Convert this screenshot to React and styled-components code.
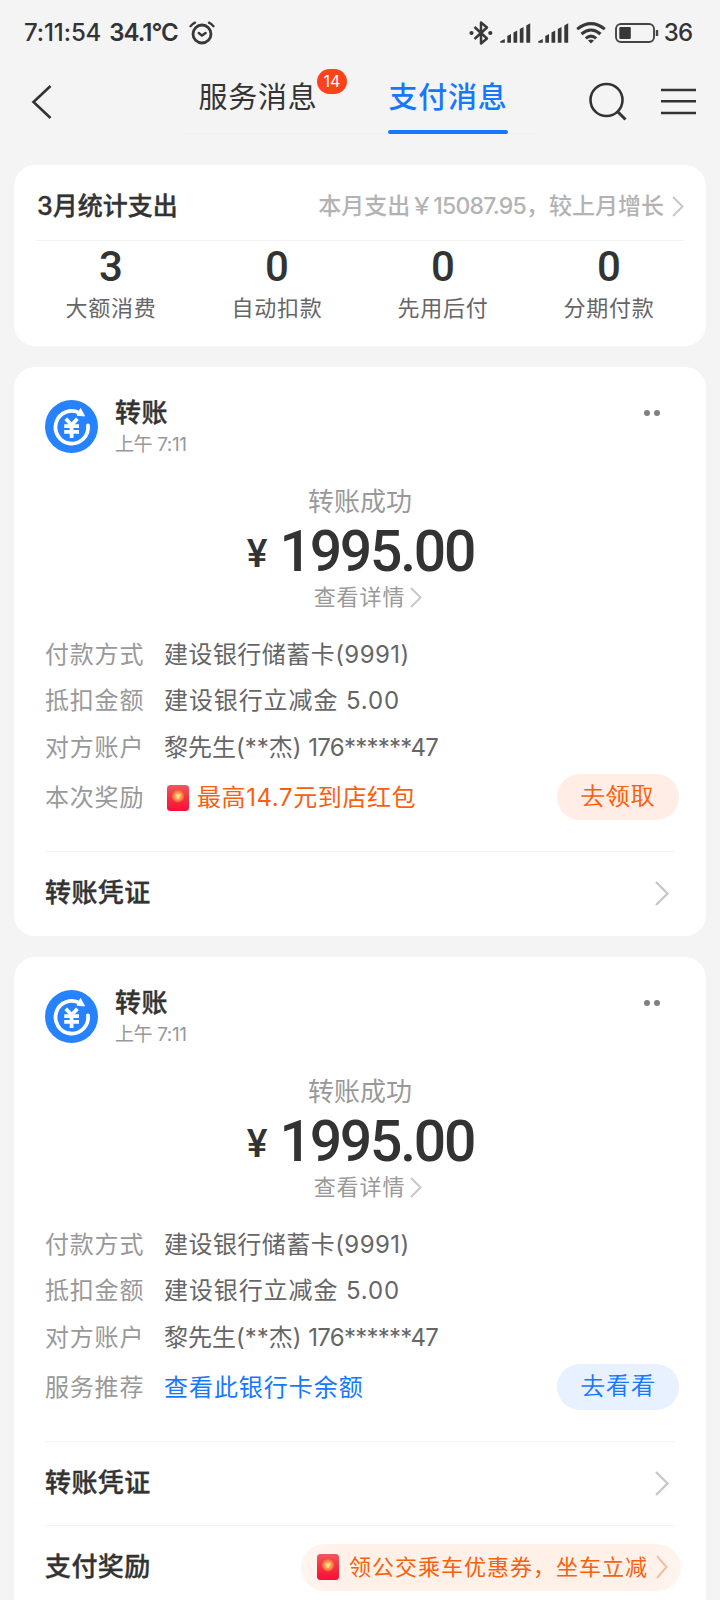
import React from "react";
import styled, { createGlobalStyle } from "styled-components";

const GlobalStyle = createGlobalStyle`
  * {
    box-sizing: border-box;
  }
  body {
    margin: 0;
    background: #f4f4f4;
    font-family: Inter, "Noto Sans CJK SC", sans-serif;
    color: #333;
  }
`;

const Page = styled.div`
  width: 720px;
  height: 1600px;
  overflow: hidden;
  background: #f4f4f4;
`;

// Text with its own size, weight and tracking
const Text = styled.span`
  display: inline-block;
  white-space: pre;
  line-height: 1;
  font-size: ${(props) => props.$size}px;
  font-weight: ${(props) => props.$weight || 400};
  letter-spacing: ${(props) => props.$track || 0}px;
  color: ${(props) => props.$color || "#333"};
`;
const Title = styled(Text)`
  font-weight: 500;
  -webkit-text-stroke: 0.35px #333;
`;
const Tight = styled.span`
  letter-spacing: -0.75px;
`;

const StatusBar = styled.div`
  display: flex;
  align-items: center;
  height: 66px;
  padding: 0 28px 0 24px;
`;
const StatusIcons = styled.div`
  display: flex;
  align-items: center;
  gap: 7px;
  margin-left: auto;
`;
const Temperature = styled(Text)`
  margin: 0 11px 0 8px;
`;
const BatteryLevel = styled.div`
  display: flex;
  align-items: center;
  gap: 5px;
  margin-left: 2px;
`;

const NavBar = styled.div`
  display: flex;
  align-items: center;
  height: 71px;
  padding: 0 24px 0 31px;
`;
const Tabs = styled.div`
  display: flex;
  width: 350px;
  height: 67px;
  margin: 0 0 3px 133px;
  padding-left: 12px;
  gap: 70px;
  border-bottom: 1px solid #f0f0f0;
`;
const Tab = styled.div`
  position: relative;
  display: flex;
  flex-direction: column;
  align-items: center;
  justify-content: space-between;
  width: 120px;
  height: 67px;
  padding-top: 16px;
`;
const Underline = styled.div`
  width: 120px;
  height: 4px;
  border-radius: 2px;
  background: #1677ff;
`;
const Badge = styled.span`
  position: absolute;
  top: 2px;
  left: 119px;
  width: 30px;
  height: 25px;
  border-radius: 13px;
  background: #ff411c;
  color: white;
  font-size: 16px;
  line-height: 25px;
  text-align: center;
`;
const NavActions = styled.div`
  display: flex;
  align-items: center;
  gap: 34px;
  margin-left: auto;
`;

const Card = styled.div`
  margin: 0 14px 21px;
  height: ${(props) => props.$height}px;
  border-radius: 21px;
  background: white;
`;
const SummaryCard = styled(Card)`
  margin-top: 28px;
  padding: 0 22px;
`;
const SummaryHeader = styled.div`
  display: flex;
  align-items: center;
  justify-content: space-between;
  height: 76px;
  padding: 8px 0 0 1px;
  border-bottom: 1px solid #f3f3f3;
`;
const SummaryLink = styled.div`
  display: flex;
  align-items: center;
  gap: 8px;
`;
const StatGrid = styled.div`
  display: grid;
  grid-template-columns: repeat(4, 166px);
  margin-left: -8px;
`;
const Stat = styled.div`
  display: flex;
  flex-direction: column;
  align-items: center;
  padding-top: 5px;
  gap: 9px;
`;
const StatCount = styled(Text)`
  font-family: Roboto, sans-serif;
`;

const CardHeader = styled.div`
  display: flex;
  height: 87px;
  padding: 33px 46px 0 31px;
`;
const Heading = styled.div`
  display: flex;
  flex-direction: column;
  flex: 1;
  margin-left: 17px;
  gap: 9px;
`;
const Dots = styled.div`
  display: flex;
  gap: 4px;
  margin-top: 10px;
  & i {
    width: 6px;
    height: 6px;
    border-radius: 50%;
    background: #808080;
  }
`;
const Result = styled.div`
  display: flex;
  flex-direction: column;
  align-items: center;
  height: 178px;
  padding-top: 35px;
`;
const Amount = styled.div`
  display: flex;
  align-items: center;
  height: 57px;
  margin: 8px 0 6px;
  padding-left: 1px;
  gap: 12px;
  font-family: Roboto, sans-serif;
`;
const Yen = styled(Text)`
  margin-top: 5px;
`;
const DetailLink = styled.div`
  display: flex;
  align-items: center;
  margin-left: 16px;
  gap: 5px;
`;
const Row = styled.div`
  display: flex;
  align-items: center;
  height: ${(props) => props.$height || 46.3}px;
  padding: 0 27px 0 31px;
`;
const Label = styled.div`
  width: 119px;
  color: #999;
`;
const Value = styled.div`
  display: flex;
  align-items: center;
  flex: 1;
  gap: 8px;
  & svg {
    margin-left: 3px;
  }
`;
const ActionButton = styled.button`
  width: 122px;
  height: 46px;
  margin-bottom: 2px;
  padding: 0 0 2px;
  border: none;
  border-radius: 23px;
  background: ${(props) => (props.$warm ? "#ffede6" : "#e7f1ff")};
`;
const Divider = styled.div`
  height: 1px;
  margin: ${(props) => props.$top || 0}px 31px 0;
  background: #f3f3f3;
`;
const FooterRow = styled.div`
  display: flex;
  align-items: center;
  justify-content: space-between;
  height: 83px;
  padding: 0 ${(props) => props.$right || 37}px 0 31px;
`;
const RewardPill = styled.div`
  display: flex;
  align-items: center;
  width: 380px;
  height: 47px;
  padding: 0 13px 0 16px;
  border-radius: 24px;
  background: linear-gradient(90deg, #fff4ef, #fff0e8 15%, #fff0e8 85%, #fff4ef);
  & ${Text} {
    margin: 0 auto 0 10px;
  }
`;

const Chevron = ({ width = 12, height = 21, color = "#c8c8c8", stroke = 2 }) => (
  <svg width={width} height={height} viewBox={`0 0 ${width} ${height}`} fill="none">
    <path
      d={`M1 1L${width - 1.5} ${height / 2}L1 ${height - 1}`}
      stroke={color}
      strokeWidth={stroke}
    />
  </svg>
);

const AlarmIcon = () => (
  <svg width="26" height="24" viewBox="0 0 26 24" fill="none" stroke="#383838" strokeLinecap="round">
    <circle cx="13" cy="13" r="9" strokeWidth="2.8" />
    <path d="M9.8 12L13 14.6L16.6 12" strokeWidth="2.5" strokeLinejoin="round" />
    <path d="M1.5 5.2Q3.5 2.8 6 1.6M20 1.6Q22.5 2.8 24.5 5.2" strokeWidth="2.3" />
  </svg>
);

const BluetoothIcon = () => (
  <svg width="24" height="26" viewBox="0 0 24 26" fill="none" stroke="#383838">
    <path d="M5.5 7L18 18.5L12 23.5V2.5L18 7.5L5.5 19" strokeWidth="2.5" strokeLinejoin="round" />
    <circle cx="2.5" cy="13" r="2.1" fill="#383838" stroke="none" />
    <circle cx="21.3" cy="13" r="2.1" fill="#383838" stroke="none" />
  </svg>
);

const SignalIcon = () => (
  <svg width="31" height="20" viewBox="0 0 31 20" fill="#383838">
    <path d="M.3 19.8V18.2L4.8 16V19.8ZM7.3 19.8V13L11 11V19.8ZM13.5 19.8V9.5L17.2 7.5V19.8ZM19.8 19.8V6L23.5 4V19.8ZM26.3 19.8V2.5L30.2 .3V19.8Z" />
  </svg>
);

const WifiIcon = () => (
  <svg width="30" height="22" viewBox="0 0 30 22" fill="none" stroke="#383838" strokeWidth="3">
    <path d="M1.2 7.2Q15-4 28.8 7.2M5.5 12Q15 4 24.5 12M9.8 16.3Q15 12 20.2 16.3" />
    <path d="M12 18.4Q15 16.6 18 18.4L15 21.5Z" fill="#383838" stroke="none" />
  </svg>
);

const BatteryIcon = () => (
  <svg width="44" height="20" viewBox="0 0 44 20" fill="none">
    <rect x="1" y="1" width="38" height="18" rx="5" stroke="#444" strokeWidth="1.9" />
    <rect x="4.3" y="4" width="11.5" height="12" rx="1.2" fill="#383838" />
    <path d="M42 7V13" stroke="#444" strokeWidth="2.4" />
  </svg>
);

const BackIcon = () => (
  <svg width="22" height="34" viewBox="0 0 22 34" fill="none">
    <path d="M19.5 1L2.5 17L19.5 33" stroke="#333" strokeWidth="2.6" />
  </svg>
);

const SearchIcon = () => (
  <svg width="38" height="39" viewBox="0 0 38 39" fill="none" stroke="#333" strokeWidth="2.6">
    <circle cx="17.5" cy="18" r="16" />
    <path d="M28.5 29.5L36.5 37.5" strokeWidth="3" />
  </svg>
);

const MenuIcon = () => (
  <svg width="35" height="27" viewBox="0 0 35 27" fill="none" stroke="#333" strokeWidth="2.6">
    <path d="M0 2H35M0 13.3H35M0 25H35" />
  </svg>
);

const TransferIcon = () => (
  <svg width="53" height="53" viewBox="0 0 53 53" fill="none" stroke="white">
    <circle cx="26.5" cy="26.5" r="26.5" fill="#2782ff" stroke="none" />
    <path d="M35 13.2A16.3 16.3 0 1 0 43 25.5" strokeWidth="3.8" strokeLinecap="round" />
    <path d="M35.5 8.5L39.5 16L32 15.2Z" fill="white" strokeWidth="1" strokeLinejoin="round" />
    <path d="M20.8 18.8L26.6 25L32.4 18.8M26.6 25V38M19.2 26.2H34M19.2 31.8H34" strokeWidth="3.8" />
  </svg>
);

const EnvelopeIcon = () => (
  <svg width="22" height="26" viewBox="0 0 22 26" fill="none">
    <defs>
      <linearGradient id="packet" x1="0" y1="0" x2="0" y2="1">
        <stop offset="0" stopColor="#ec5a5f" />
        <stop offset="0.5" stopColor="#f62f40" />
        <stop offset="1" stopColor="#f90f3a" />
      </linearGradient>
      <radialGradient id="coin">
        <stop offset="0" stopColor="#ffe08a" />
        <stop offset="0.5" stopColor="#ffa04d" />
        <stop offset="1" stopColor="#f54a3a" />
      </radialGradient>
    </defs>
    <rect width="22" height="26" rx="3.5" fill="url(#packet)" />
    <circle cx="11" cy="11" r="6.5" fill="url(#coin)" />
    <path d="M9 9.3L11 11.5L13 9.3M11 11.5V14" stroke="#fff3c0" strokeWidth="1" />
  </svg>
);

const stats = [
  { count: 3, label: "大额消费" },
  { count: 0, label: "自动扣款" },
  { count: 0, label: "先用后付" },
  { count: 0, label: "分期付款" },
];

const details = [
  { label: "付款方式", value: "建设银行储蓄卡(9991)", track: 0.45 },
  { label: "抵扣金额", value: "建设银行立减金 5.00", track: 0.9 },
  { label: "对方账户", value: "黎先生(**杰) ", tail: "176******47", track: 0 },
];

const TransferCard = (props) => (
  <Card $height={props.height}>
    <CardHeader>
      <TransferIcon />
      <Heading>
        <Title $size={26} $track={0.5}>转账</Title>
        <Text $size={19} $color="#999" $track={-0.4}>上午 7:11</Text>
      </Heading>
      <Dots>
        <i />
        <i />
      </Dots>
    </CardHeader>
    <Result>
      <Text $size={26} $color="#999">转账成功</Text>
      <Amount>
        <Yen $size={39} $weight={500}>¥</Yen>
        <Text $size={57} $weight={500} $track={-2.2}>1995.00</Text>
      </Amount>
      <DetailLink>
        <Text $size={22} $color="#999" $track={0.9}>查看详情</Text>
        <Chevron />
      </DetailLink>
    </Result>
    {details.map((item) => (
      <Row key={item.label}>
        <Label>
          <Text $size={24} $color="#999" $track={0.8}>{item.label}</Text>
        </Label>
        <Text $size={24} $color="#666" $track={item.track}>
          {item.value}
          {item.tail && <Tight>{item.tail}</Tight>}
        </Text>
      </Row>
    ))}
    <Row $height={54}>
      <Label>
        <Text $size={24} $color="#999" $track={0.8}>{props.extraLabel}</Text>
      </Label>
      <Value>{props.children}</Value>
      <ActionButton $warm={props.warm}>
        <Text $size={24} $weight={500} $track={1} $color={props.warm ? "#f8600f" : "#1677ff"}>
          {props.action}
        </Text>
      </ActionButton>
    </Row>
    <Divider $top={26} />
    <FooterRow>
      <Title $size={26} $track={0.4}>转账凭证</Title>
      <Chevron width={14} height={25} stroke={2.4} />
    </FooterRow>
    {props.footer}
  </Card>
);

const App = () => (
  <Page>
    <GlobalStyle />
    <StatusBar>
      <Text $size={24} $weight={500} $track={-0.1}>7:11:54</Text>
      <Temperature $size={24} $weight={600} $track={-1}>34.1°C</Temperature>
      <AlarmIcon />
      <StatusIcons>
        <BluetoothIcon />
        <SignalIcon />
        <SignalIcon />
        <WifiIcon />
        <BatteryLevel>
          <BatteryIcon />
          <Text $size={24} $weight={500} $track={-1}>36</Text>
        </BatteryLevel>
      </StatusIcons>
    </StatusBar>
    <NavBar>
      <BackIcon />
      <Tabs>
        <Tab>
          <Text $size={29} $track={0.8}>服务消息</Text>
          <Badge>14</Badge>
        </Tab>
        <Tab>
          <Text $size={29} $weight={500} $track={0.8} $color="#1677ff">支付消息</Text>
          <Underline />
        </Tab>
      </Tabs>
      <NavActions>
        <SearchIcon />
        <MenuIcon />
      </NavActions>
    </NavBar>
    <SummaryCard $height={181}>
      <SummaryHeader>
        <Title $size={25}>3月统计支出</Title>
        <SummaryLink>
          <Text $size={23} $weight={500} $color="#b3b3b3">
            本月支出￥<Tight>15087.95</Tight>，较上月增长
          </Text>
          <Chevron />
        </SummaryLink>
      </SummaryHeader>
      <StatGrid>
        {stats.map((stat) => (
          <Stat key={stat.label}>
            <StatCount $size={42} $weight={500}>{stat.count}</StatCount>
            <Text $size={22} $color="#666" $track={0.8}>{stat.label}</Text>
          </Stat>
        ))}
      </StatGrid>
    </SummaryCard>
    <TransferCard height={569} extraLabel="本次奖励" action="去领取" warm>
      <EnvelopeIcon />
      <Text $size={24} $color="#f8600f" $track={0.6}>最高14.7元到店红包</Text>
    </TransferCard>
    <TransferCard
      height={700}
      extraLabel="服务推荐"
      action="去看看"
      footer={
        <>
          <Divider />
          <FooterRow $right={25}>
            <Title $size={26} $track={0.4}>支付奖励</Title>
            <RewardPill>
              <EnvelopeIcon />
              <Text $size={22} $color="#f8600f" $track={1}>领公交乘车优惠券，坐车立减</Text>
              <Chevron height={24} color="#f3bd9f" />
            </RewardPill>
          </FooterRow>
        </>
      }
    >
      <Text $size={24} $color="#1677ff" $track={0.95}>查看此银行卡余额</Text>
    </TransferCard>
  </Page>
);

export default App;
